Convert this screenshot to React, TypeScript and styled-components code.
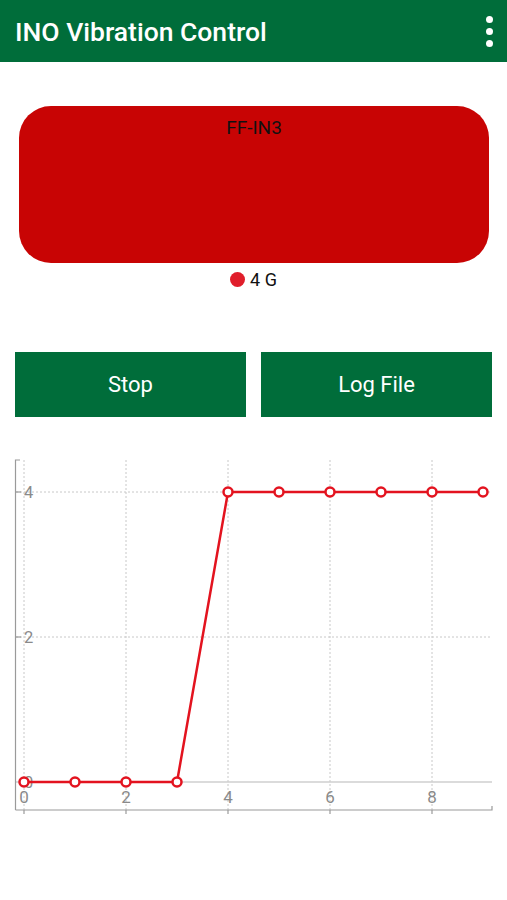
import { FunctionComponent } from "react";
import styled, { createGlobalStyle } from "styled-components";

const GREEN = "#006d3a";
const RED = "#c80404";
const LINE = "#e3131f";

const GlobalStyle = createGlobalStyle`
  body {
    margin: 0;
    background: #ffffff;
    font-family: Roboto, "Noto Sans", sans-serif;
  }
`;

const Page = styled.div`
  width: 507px;
  height: 900px;
  background: #ffffff;
  overflow: hidden;
`;

const Header = styled.header`
  height: 62px;
  background: ${GREEN};
  display: flex;
  align-items: center;
  justify-content: space-between;
  padding: 0 14px 0 15px;
  box-sizing: border-box;
  h1 {
    margin: 0;
    color: #ffffff;
    font-size: 26.5px;
    font-weight: 500;
  }
`;

const Kebab = styled.div`
  display: flex;
  flex-direction: column;
  gap: 5px;
  span {
    width: 7px;
    height: 7px;
    border-radius: 50%;
    background: #ffffff;
  }
`;

const Card = styled.div`
  margin: 44px 18px 0 19px;
  height: 157px;
  background: ${RED};
  border-radius: 32px;
  text-align: center;
  padding-top: 10px;
  box-sizing: border-box;
  color: #111111;
  font-size: 19px;
`;

const Legend = styled.div`
  margin-top: 6px;
  display: flex;
  justify-content: center;
  align-items: center;
  gap: 5px;
  font-size: 18px;
  color: #111111;
`;

const Dot = styled.span`
  width: 15px;
  height: 15px;
  border-radius: 50%;
  background: #e01e2b;
`;

const ButtonRow = styled.div`
  margin: 62px 15px 0 15px;
  display: grid;
  grid-template-columns: 1fr 1fr;
  gap: 15px;
`;

const Button = styled.div`
  height: 65px;
  background: ${GREEN};
  color: #ffffff;
  font-size: 22px;
  display: flex;
  align-items: center;
  justify-content: center;
`;

const ChartBox = styled.div`
  margin-top: 38px;
  height: 370px;
  svg {
    display: block;
  }
`;

const data = [0, 0, 0, 0, 4, 4, 4, 4, 4, 4];
const x0 = 24;
const dx = 51;
const y0 = 327;
const dy = 72.5;
const px = (i: number) => x0 + i * dx;
const py = (v: number) => y0 - v * dy;

const Chart: FunctionComponent = () => {
  const points = data.map((v, i) => `${px(i)},${py(v)}`).join(" ");
  return (
    <svg width="507" height="370" viewBox="0 0 507 370">
      {/* vertical grid */}
      {[0, 2, 4, 6, 8].map((v) => (
        <line key={`gx${v}`} x1={px(v)} y1={5} x2={px(v)} y2={355} stroke="#c8c8c8" strokeWidth="1" strokeDasharray="2 2" />
      ))}
      {/* horizontal grid */}
      {[2, 4].map((v) => (
        <line key={`gy${v}`} x1={16} y1={py(v)} x2={492} y2={py(v)} stroke="#c8c8c8" strokeWidth="1" strokeDasharray="2 2" />
      ))}
      <line x1={16} y1={y0} x2={492} y2={y0} stroke="#cfcfcf" strokeWidth="1.5" />
      {/* y axis */}
      <path d="M20 5 H15.5 V355" fill="none" stroke="#9a9a9a" strokeWidth="1.2" />
      {[2, 4].map((v) => (
        <line key={`ty${v}`} x1={15.5} y1={py(v)} x2={21} y2={py(v)} stroke="#9a9a9a" strokeWidth="1.2" />
      ))}
      {[0, 2, 4].map((v) => (
        <text key={`ly${v}`} x={24} y={py(v) + 6} fontSize="16.5" fill="#8a8a8a" fontFamily="Roboto, sans-serif">
          {v}
        </text>
      ))}
      {/* x axis */}
      <path d="M15.5 355 H492 V351" fill="none" stroke="#9a9a9a" strokeWidth="1.2" />
      {[0, 2, 4, 6, 8].map((v) => (
        <line key={`tx${v}`} x1={px(v)} y1={355} x2={px(v)} y2={359} stroke="#9a9a9a" strokeWidth="1.2" />
      ))}
      {[0, 2, 4, 6, 8].map((v) => (
        <text key={`lx${v}`} x={px(v)} y={348} fontSize="17" fill="#8a8a8a" textAnchor="middle" fontFamily="Roboto, sans-serif">
          {v}
        </text>
      ))}
      <polyline points={points} fill="none" stroke={LINE} strokeWidth="2.5" />
      {data.map((v, i) => (
        <circle key={i} cx={px(i)} cy={py(v)} r="4.5" fill="#ffffff" stroke={LINE} strokeWidth="2.5" />
      ))}
    </svg>
  );
};

const App: FunctionComponent = () => {
  return (
    <Page>
      <GlobalStyle />
      <Header>
        <h1>INO Vibration Control</h1>
        <Kebab>
          <span />
          <span />
          <span />
        </Kebab>
      </Header>
      <Card>FF-IN3</Card>
      <Legend>
        <Dot />
        <span>4 G</span>
      </Legend>
      <ButtonRow>
        <Button>Stop</Button>
        <Button>Log File</Button>
      </ButtonRow>
      <ChartBox>
        <Chart />
      </ChartBox>
    </Page>
  );
};

export default App;
